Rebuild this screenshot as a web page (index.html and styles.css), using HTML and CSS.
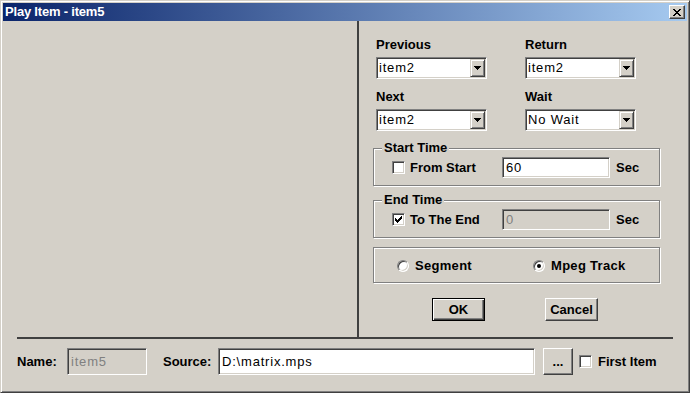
FILE: index.html
```html
<!DOCTYPE html>
<html>
<head>
	<title>Play Item - item5</title>
	<link rel="stylesheet" href="styles.css">
</head>
<body>
	<div class="window">
		<div class="titlebar">
			<span class="title">Play Item - item5</span>
			<button class="close" type="button">
				<svg width="8" height="7" viewBox="0 0 8 7"><path d="M0 0h2v1H0zM6 0h2v1H6zM1 1h2v1H1zM5 1h2v1H5zM2 2h4v1H2zM3 3h2v1H3zM2 4h4v1H2zM1 5h2v1H1zM5 5h2v1H5zM0 6h2v1H0zM6 6h2v1H6z" fill="#000"/></svg>
			</button>
		</div>

		<div class="main">
			<div class="pane_left"></div>
			<div class="vline"></div>
			<div class="pane_right">
				<div class="pickers">
					<div class="field">
						<label>Previous</label>
						<div class="combo sunken"><span class="value">item2</span><span class="drop"><svg width="7" height="4" viewBox="0 0 7 4"><path d="M0 0h7v1H0zM1 1h5v1H1zM2 2h3v1H2zM3 3h1v1H3z" fill="#000"/></svg></span></div>
					</div>
					<div class="field">
						<label>Return</label>
						<div class="combo sunken"><span class="value">item2</span><span class="drop"><svg width="7" height="4" viewBox="0 0 7 4"><path d="M0 0h7v1H0zM1 1h5v1H1zM2 2h3v1H2zM3 3h1v1H3z" fill="#000"/></svg></span></div>
					</div>
					<div class="field">
						<label>Next</label>
						<div class="combo sunken"><span class="value">item2</span><span class="drop"><svg width="7" height="4" viewBox="0 0 7 4"><path d="M0 0h7v1H0zM1 1h5v1H1zM2 2h3v1H2zM3 3h1v1H3z" fill="#000"/></svg></span></div>
					</div>
					<div class="field">
						<label>Wait</label>
						<div class="combo sunken"><span class="value">No Wait</span><span class="drop"><svg width="7" height="4" viewBox="0 0 7 4"><path d="M0 0h7v1H0zM1 1h5v1H1zM2 2h3v1H2zM3 3h1v1H3z" fill="#000"/></svg></span></div>
					</div>
				</div>

				<fieldset class="group start_time">
					<legend>Start Time</legend>
					<div class="row">
						<label class="check"><span class="box sunken"></span>From Start</label>
						<div class="edit sunken">60</div>
						<span class="unit">Sec</span>
					</div>
				</fieldset>

				<fieldset class="group end_time">
					<legend>End Time</legend>
					<div class="row">
						<label class="check"><span class="box sunken"><svg width="7" height="7" viewBox="0 0 7 7"><path d="M6 0h1v1H6zM5 1h2v1H5zM0 2h1v1H0zM4 2h3v1H4zM0 3h2v1H0zM3 3h3v1H3zM0 4h5v1H0zM1 5h3v1H1zM2 6h1v1H2z" fill="#000"/></svg></span>To The End</label>
						<div class="edit sunken off">0</div>
						<span class="unit">Sec</span>
					</div>
				</fieldset>

				<div class="group kind">
					<label class="option"><span class="radio"></span>Segment</label>
					<label class="option"><span class="radio on"></span>Mpeg Track</label>
				</div>

				<div class="buttons">
					<button class="btn default" type="button">OK</button>
					<button class="btn" type="button">Cancel</button>
				</div>
			</div>
		</div>

		<div class="hline"></div>

		<div class="footer">
			<span class="flabel name_label">Name:</span>
			<div class="edit sunken off name">item5</div>
			<span class="flabel source_label">Source:</span>
			<div class="edit sunken source">D:\matrix.mps</div>
			<button class="btn browse" type="button">...</button>
			<span class="box sunken first_box"></span>
			<span class="first_label">First Item</span>
		</div>
	</div>
</body>
</html>
```

FILE: styles.css
```css
/* Classic dialog */

body { margin: 0; font-family: "Liberation Sans", Arial, sans-serif; font-size: 13px; color: #000; }

.window {
	width: 690px; height: 393px; box-sizing: border-box;
	display: flex; flex-direction: column;
	padding: 2px; background: #d4d0c8;
	border: 1px solid; border-color: #d4d0c8 #404040 #404040 #d4d0c8;
	box-shadow: inset 1px 1px #fff, inset -1px -1px #808080;
}

.titlebar {
	flex: none; height: 18px; padding: 0 2px;
	display: flex; align-items: center; justify-content: space-between;
	background: linear-gradient(to right, #0a246a, #a6caf0);
}
.title { color: #fff; font-weight: bold; font-size: 13px; letter-spacing: -0.2px; line-height: 18px; }
.close {
	width: 16px; height: 14px; box-sizing: border-box; padding: 0;
	display: flex; align-items: center; justify-content: center;
	background: #d4d0c8;
	border: 1px solid; border-color: #fff #404040 #404040 #fff;
	box-shadow: inset -1px -1px #808080;
}

/* Bevels */

.sunken {
	box-sizing: border-box; background: #fff;
	border: 1px solid; border-color: #808080 #fff #fff #808080;
	box-shadow: inset 1px 1px #404040, inset -1px -1px #d4d0c8;
}

/* Panes */

.main { flex: none; height: 316px; display: flex; }
.pane_left { width: 354px; }
.vline { width: 2px; background: #404040; }
.pane_right { flex: 1; padding: 16px 0 0 14px; }

.pickers { display: grid; grid-template-columns: 111px 111px; column-gap: 38px; row-gap: 10px; margin-left: 3px; }
.field label { display: block; font-weight: bold; line-height: 16px; margin-bottom: 4px; }
.combo { width: 111px; height: 22px; padding: 1px; display: flex; }
.combo .value { flex: 1; line-height: 18px; padding-left: 1px; letter-spacing: 0.8px; }
.drop {
	width: 15px; height: 18px; box-sizing: border-box;
	display: flex; align-items: center; justify-content: center;
	background: #d4d0c8;
	border: 1px solid; border-color: #d4d0c8 #404040 #404040 #d4d0c8;
	box-shadow: inset 1px 1px #fff, inset -1px -1px #808080;
}

.group {
	width: 287px; min-width: 0; box-sizing: border-box; margin: 9px 0 0;
	padding: 1px 8px 7px;
	border: 1px solid #808080;
	box-shadow: 1px 1px #fff, inset 1px 1px #fff;
}
.group legend { padding: 0 2px; font-weight: bold; line-height: 16px; background: #d4d0c8; }
.end_time { margin-top: 6px; }

.row { display: flex; align-items: center; height: 21px; }
.check { width: 120px; display: flex; align-items: center; font-weight: bold; }
.box { width: 13px; height: 13px; flex: none; display: flex; align-items: center; justify-content: center; }
.check .box { margin: 0 5px 0 10px; }
.edit { width: 108px; height: 21px; padding: 0 3px; line-height: 19px; letter-spacing: 0.8px; white-space: nowrap; }
.edit.off { background: #d4d0c8; color: #808080; }
.unit { margin-left: 6px; font-weight: bold; }

.kind { display: flex; align-items: center; padding: 10px 0 8px 23px; margin-top: 9px; }
.option { display: flex; align-items: center; font-weight: bold; line-height: 16px; letter-spacing: 0.3px; }
.option:first-child { width: 136px; }
.radio {
	width: 12px; height: 12px; box-sizing: border-box; margin-right: 6px; border-radius: 50%;
	display: flex; align-items: center; justify-content: center; background: #fff;
	border: 1px solid; border-color: #808080 #fff #fff #808080;
	box-shadow: inset 1px 1px #404040, inset -1px -1px #d4d0c8;
}
.radio.on::after { content: ""; width: 4px; height: 4px; border-radius: 50%; background: #000; }

.buttons { display: flex; gap: 60px; margin-top: 15px; padding-left: 59px; }
.btn {
	width: 53px; height: 23px; box-sizing: border-box; padding: 0;
	font: bold 13px "Liberation Sans", Arial, sans-serif; color: #000;
	background: #d4d0c8;
	border: 1px solid; border-color: #fff #404040 #404040 #fff;
	box-shadow: inset -1px -1px #808080;
}
.btn.default { border-color: #000; box-shadow: inset 1px 1px #fff, inset -1px -1px #404040, inset -2px -2px #808080; }

.hline { flex: none; height: 2px; margin: 0 14px; background: #404040; }

/* Footer */

.footer { flex: none; display: flex; align-items: center; height: 27px; margin-top: 9px; padding-left: 14px; }
.flabel { font-weight: bold; }
.name_label { width: 50px; }
.edit.name { width: 80px; height: 27px; line-height: 25px; }
.source_label { width: 55px; margin-left: 16px; }
.edit.source { width: 317px; height: 27px; line-height: 25px; }
.btn.browse { width: 30px; height: 27px; margin-left: 8px; }
.first_box { margin-left: 6px; }
.first_label { margin-left: 6px; font-weight: bold; }
```
